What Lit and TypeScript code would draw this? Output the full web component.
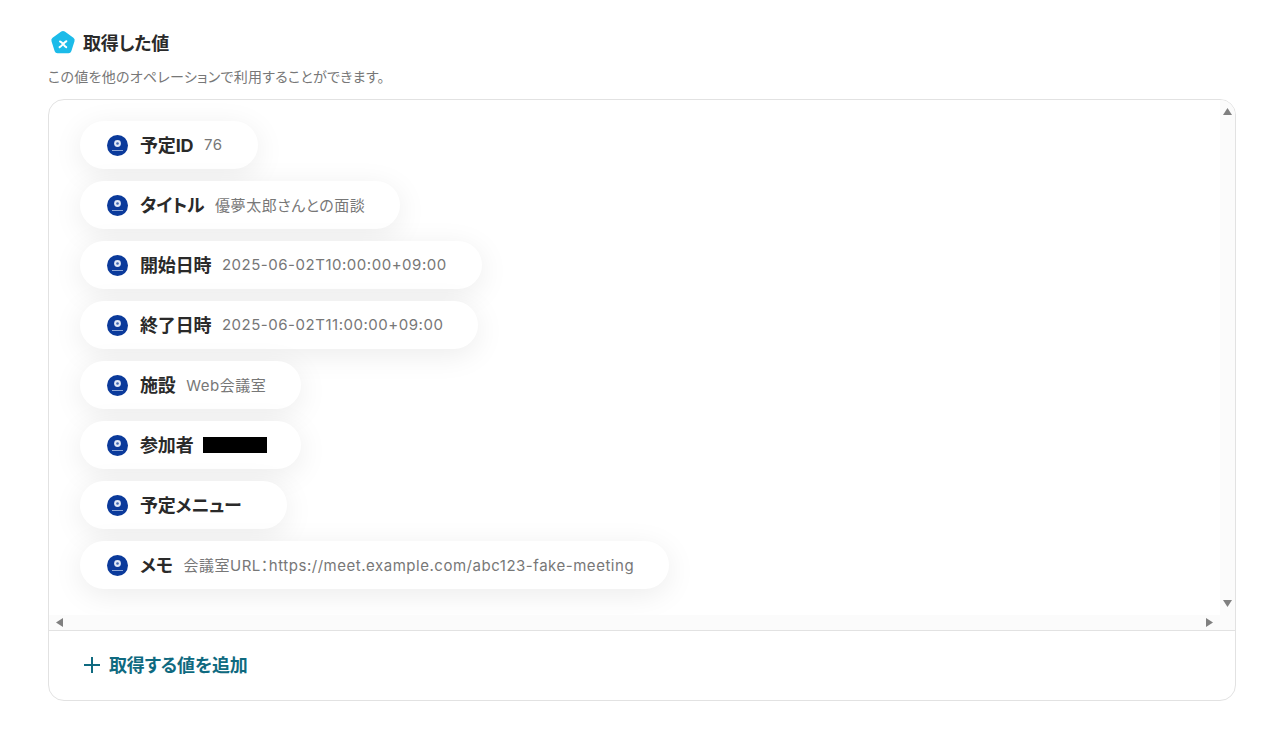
import { LitElement, css, html } from 'lit';
import { customElement } from 'lit/decorators.js';

const rows = [
  { label: '予定ID', value: '76' },
  { label: 'タイトル', value: '優夢太郎さんとの面談' },
  { label: '開始日時', value: '2025-06-02T10:00:00+09:00' },
  { label: '終了日時', value: '2025-06-02T11:00:00+09:00' },
  { label: '施設', value: 'Web会議室' },
  { label: '参加者', value: '', redacted: true },
  { label: '予定メニュー', value: '' },
  { label: 'メモ', value: '会議室URL：https://meet.example.com/abc123-fake-meeting' },
];

@customElement('app-root')
export class AppRoot extends LitElement {
  static styles = css`
    :host {
      display: block;
      font-family: Inter, 'Noto Sans CJK JP', sans-serif;
      font-feature-settings: 'palt';
      background: #fff;
      height: 739px;
      overflow: hidden;
      color: #2a2a2a;
    }

    .page {
      padding: 29px 48px 0;
    }

    .heading {
      display: flex;
      align-items: center;
      gap: 7px;
      padding-left: 2px;
      height: 28px;
    }

    .heading svg {
      display: block;
    }

    .heading h2 {
      margin: 2px 0 0;
      font-size: 18px;
      letter-spacing: -0.01em;
      line-height: 28px;
      font-weight: 700;
    }

    .hint {
      margin: 10px 0 0;
      font-size: 14px;
      letter-spacing: 0.28px;
      line-height: 20px;
      color: #777;
    }

    .panel {
      margin-top: 12px;
      height: 600px;
      border: 1px solid #e2e2e2;
      border-radius: 16px;
      overflow: hidden;
    }

    .scroller {
      position: relative;
      height: 530px;
      border-bottom: 1px solid #e2e2e2;
      overflow: hidden;
    }

    .rows {
      display: flex;
      flex-direction: column;
      align-items: flex-start;
      gap: 12px;
      padding: 21px 0 0 31px;
    }

    .pill {
      display: flex;
      align-items: center;
      height: 48px;
      padding: 0 35px 0 27px;
      border-radius: 24px;
      background: #fff;
      box-shadow: 0 6px 30px rgba(0, 0, 0, 0.08);
      white-space: nowrap;
    }

    .pill svg {
      display: block;
      margin-right: 12px;
      flex: none;
    }

    .label {
      padding-bottom: 2px;
      font-size: 18px;
      letter-spacing: -0.01em;
      font-weight: 700;
      color: #2a2a2a;
    }

    .value {
      margin-left: 10.6px;
      padding-bottom: 1px;
      font-size: 15px;
      letter-spacing: 0.035em;
      color: #777;
    }

    .redacted {
      margin: 0 -1px 0 10px;
      width: 64px;
      height: 16px;
      background: #000;
    }

    .bar {
      position: absolute;
      background: #fbfbfb;
    }

    .bar.vertical {
      top: 0;
      right: 0;
      bottom: 15px;
      width: 15px;
    }

    .bar.horizontal {
      left: 0;
      right: 0;
      bottom: 0;
      height: 15px;
    }

    .arrow {
      position: absolute;
      display: block;
    }

    .arrow.up {
      top: 8px;
      right: 3px;
    }

    .arrow.down {
      bottom: 23px;
      right: 3px;
    }

    .arrow.left {
      bottom: 3px;
      left: 7px;
    }

    .arrow.right {
      bottom: 3px;
      right: 22px;
    }

    .add {
      display: flex;
      align-items: center;
      gap: 9px;
      height: 68px;
      padding-left: 35px;
      color: #0f6a80;
      font-size: 18px;
      letter-spacing: -0.01em;
      font-weight: 700;
    }

    .add svg {
      display: block;
    }

    .add span {
      padding-bottom: 2px;
    }
  `;

  private serviceIcon() {
    return html`<svg width="21" height="21" viewBox="0 0 21 21">
      <circle cx="10.5" cy="10.5" r="10.5" fill="#0b3a9b"></circle>
      <circle cx="10.5" cy="8.5" r="3.4" fill="#dfe7f6"></circle>
      <circle cx="10.5" cy="8.5" r="1.3" fill="#3c66b4"></circle>
      <rect x="5" y="15" width="11" height="1" fill="#8ea6d6"></rect>
    </svg>`;
  }

  render() {
    return html`
      <div class="page">
        <div class="heading">
          <svg width="26" height="26" viewBox="0 0 26 26">
            <path
              d="M11.2 1.6a3 3 0 0 1 3.6 0l8.6 6.2a3 3 0 0 1 1.1 3.4l-3.2 10a3 3 0 0 1-2.9 2.1H7.6a3 3 0 0 1-2.9-2.1l-3.2-10a3 3 0 0 1 1.1-3.4z"
              fill="#1cbbe9"
            ></path>
            <path
              d="M10 11.4c2.4.4 3.8 4.4 6.2 5.8M16.4 11.2c-2 .8-4.4 4.6-6.8 6"
              fill="none"
              stroke="#fff"
              stroke-width="2"
              stroke-linecap="round"
            ></path>
          </svg>
          <h2>取得した値</h2>
        </div>
        <p class="hint">この値を他のオペレーションで利用することができます。</p>
        <div class="panel">
          <div class="scroller">
            <div class="rows">
              ${rows.map(
                (row) => html`
                  <div class="pill">
                    ${this.serviceIcon()}
                    <span class="label">${row.label}</span>
                    ${row.redacted
                      ? html`<span class="redacted"></span>`
                      : html`<span class="value">${row.value}</span>`}
                  </div>
                `
              )}
            </div>
            <div class="bar vertical"></div>
            <div class="bar horizontal"></div>
            <svg class="arrow up" width="9" height="7" viewBox="0 0 9 7"><path d="M4.5 0L9 7H0z" fill="#808080"></path></svg>
            <svg class="arrow down" width="9" height="7" viewBox="0 0 9 7"><path d="M0 0h9L4.5 7z" fill="#808080"></path></svg>
            <svg class="arrow left" width="7" height="9" viewBox="0 0 7 9"><path d="M7 0v9L0 4.5z" fill="#808080"></path></svg>
            <svg class="arrow right" width="7" height="9" viewBox="0 0 7 9"><path d="M0 0l7 4.5L0 9z" fill="#808080"></path></svg>
          </div>
          <div class="add">
            <svg width="16" height="16" viewBox="0 0 16 16">
              <path d="M8 0v16M0 8h16" fill="none" stroke="#0f6a80" stroke-width="2"></path>
            </svg>
            <span>取得する値を追加</span>
          </div>
        </div>
      </div>
    `;
  }
}

declare global {
  interface HTMLElementTagNameMap {
    'app-root': AppRoot;
  }
}
